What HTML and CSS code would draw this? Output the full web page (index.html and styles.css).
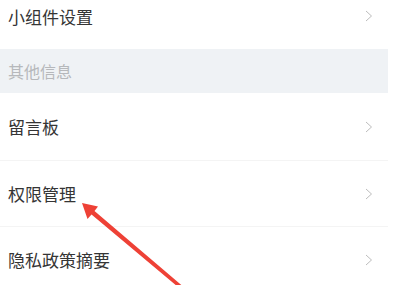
FILE: index.html
```html
<!DOCTYPE html>
<html lang="zh">
<head>
<meta charset="utf-8">
<link rel="stylesheet" href="styles.css">
</head>
<body>
<div class="page">
  <div class="list">
    <div class="row first">
      <span class="label">小组件设置</span>
      <svg class="chev" width="8" height="12" viewBox="0 0 8 12"><polyline points="1,1 6.5,6 1,11" fill="none" stroke="#bdbdbd" stroke-width="1"/></svg>
    </div>
    <div class="section">其他信息</div>
    <div class="row">
      <span class="label">留言板</span>
      <svg class="chev" width="8" height="12" viewBox="0 0 8 12"><polyline points="1,1 6.5,6 1,11" fill="none" stroke="#bdbdbd" stroke-width="1"/></svg>
    </div>
    <div class="row">
      <span class="label">权限管理</span>
      <svg class="chev" width="8" height="12" viewBox="0 0 8 12"><polyline points="1,1 6.5,6 1,11" fill="none" stroke="#bdbdbd" stroke-width="1"/></svg>
    </div>
    <div class="row">
      <span class="label">隐私政策摘要</span>
      <svg class="chev" width="8" height="12" viewBox="0 0 8 12"><polyline points="1,1 6.5,6 1,11" fill="none" stroke="#bdbdbd" stroke-width="1"/></svg>
    </div>
  </div>
  <svg class="arrow" width="399" height="285" viewBox="0 0 399 285">
    <polygon fill="#ee4136" points="82,203 98,206.5 94.5,211 186,289 184,292 91.5,214.5 87.5,219"/>
  </svg>
</div>
</body>
</html>
```
FILE: styles.css
```css
html, body {
  margin: 0;
  padding: 0;
  background: #ffffff;
}
body {
  font-family: "Noto Sans CJK SC", "Noto Sans", sans-serif;
  width: 399px;
  height: 285px;
  overflow: hidden;
}
.page {
  position: relative;
  width: 399px;
  height: 285px;
  overflow: hidden;
}
.list {
  width: 388px;
  margin-top: -17px;
  display: flex;
  flex-direction: column;
}
.row {
  height: 66px;
  display: flex;
  align-items: center;
  justify-content: space-between;
  padding: 0 15px 0 8px;
  border-top: 1px solid #f4f4f4;
  box-sizing: border-box;
}
.row.first {
  border-top: none;
}
.label {
  font-size: 17px;
  line-height: 1;
  color: #353535;
}
.chev {
  display: block;
}
.section {
  height: 44px;
  background: #eff2f5;
  display: flex;
  align-items: center;
  padding-left: 8px;
  font-size: 16px;
  line-height: 1;
  color: #b6b8bb;
}
.section + .row {
  border-top: none;
  height: 67px;
}
.arrow {
  position: absolute;
  left: 0;
  top: 0;
}
```
